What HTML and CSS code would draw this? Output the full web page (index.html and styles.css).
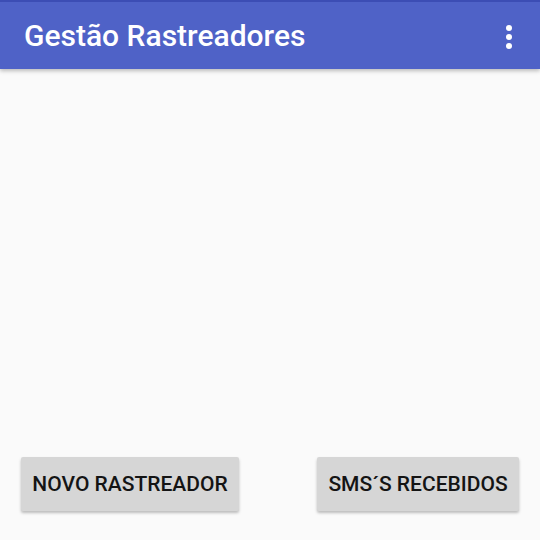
FILE: index.html
```html
<!DOCTYPE html>
<html lang="pt">
<head>
<meta charset="utf-8">
<title>Gestão Rastreadores</title>
<link rel="stylesheet" href="styles.css">
</head>
<body>
<div class="screen">
  <header class="appbar">
    <h1 class="title">Gestão Rastreadores</h1>
    <div class="menu" aria-label="Mais opções">
      <span class="dot"></span><span class="dot"></span><span class="dot"></span>
    </div>
  </header>
  <main class="content"></main>
  <footer class="actions">
    <button class="btn">NOVO RASTREADOR</button>
    <button class="btn">SMS´S RECEBIDOS</button>
  </footer>
</div>
</body>
</html>
```
FILE: styles.css
```css
* { box-sizing: border-box; }
html, body { margin: 0; padding: 0; }
body {
  width: 540px;
  height: 540px;
  background: #fafafa;
  font-family: Roboto, "Liberation Sans", sans-serif;
  overflow: hidden;
}
.screen {
  display: flex;
  flex-direction: column;
  height: 540px;
}
.appbar {
  height: 69px;
  background: #4f62c7;
  border-top: 2px solid #3c4db4;
  display: flex;
  align-items: center;
  justify-content: space-between;
  padding: 0 28px 0 24px;
  box-shadow: 0 2px 4px rgba(0,0,0,0.25);
  position: relative;
  z-index: 1;
}
.title {
  margin: 0;
  color: #ffffff;
  font-size: 30px;
  font-weight: 500;
  letter-spacing: 0;
  line-height: 1;
  margin-top: 1px;
}
.menu {
  display: flex;
  flex-direction: column;
  gap: 3px;
  margin-top: 2px;
}
.dot {
  width: 6px;
  height: 6px;
  border-radius: 50%;
  background: #ffffff;
}
.content { flex: 1; }
.actions {
  display: flex;
  justify-content: space-between;
  padding: 0 21px 29px 21px;
}
.btn {
  height: 54px;
  border: none;
  border-radius: 2px;
  background: #d6d6d6;
  color: #141414;
  font-family: Roboto, "Liberation Sans", sans-serif;
  font-size: 21px;
  font-weight: 500;
  padding: 0 8px;
  box-shadow: 0 2px 3px rgba(0,0,0,0.25);
}
.btn:first-child { width: 218px; }
.btn:last-child { width: 202px; }
```
